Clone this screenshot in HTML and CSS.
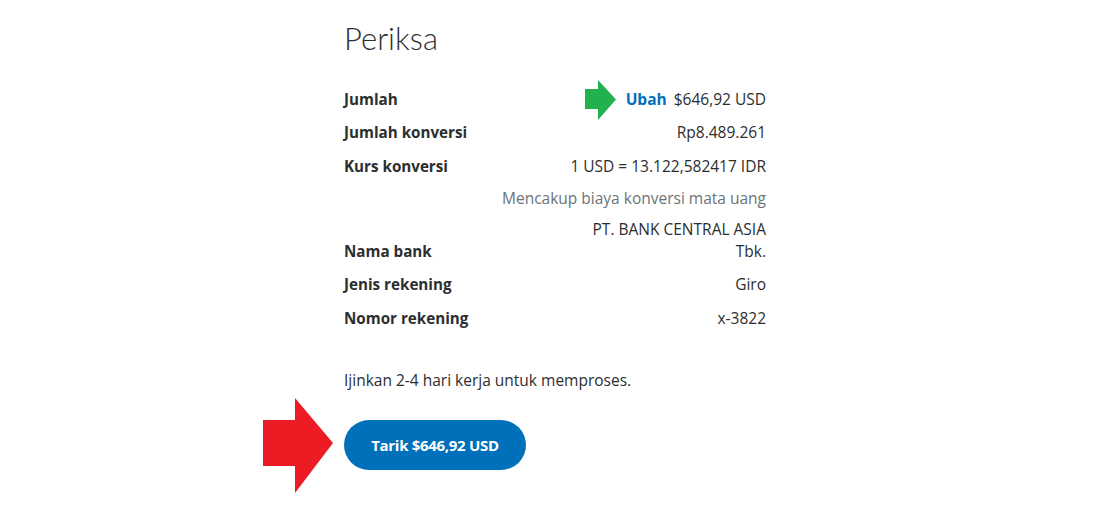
FILE: index.html
```html
<!DOCTYPE html>
<html lang="id">
<head>
<meta charset="utf-8">
<title>Periksa</title>
<link rel="stylesheet" href="styles.css">
</head>
<body>
<main class="review">
  <h1 class="title">Periksa</h1>
  <dl class="details">
    <div class="row">
      <dt>Jumlah</dt>
      <dd><a class="change" href="#">Ubah</a> $646,92 USD</dd>
    </div>
    <div class="row">
      <dt>Jumlah konversi</dt>
      <dd>Rp8.489.261</dd>
    </div>
    <div class="row">
      <dt>Kurs konversi</dt>
      <dd>1 USD = 13.122,582417 IDR</dd>
    </div>
    <div class="note">Mencakup biaya konversi mata uang</div>
    <div class="row row-bank">
      <dt>Nama bank</dt>
      <dd>PT. BANK CENTRAL ASIA<br>Tbk.</dd>
    </div>
    <div class="row">
      <dt>Jenis rekening</dt>
      <dd>Giro</dd>
    </div>
    <div class="row">
      <dt>Nomor rekening</dt>
      <dd>x-3822</dd>
    </div>
  </dl>
  <p class="info">Ijinkan 2-4 hari kerja untuk memproses.</p>
  <button class="withdraw" type="button">Tarik $646,92 USD</button>
</main>
<svg class="arrow arrow-green" width="32" height="41" viewBox="0 0 32 41" aria-hidden="true">
  <polygon points="0,9 13,9 13,0 31,19.5 13,40 13,29 0,29" fill="#22b14c"/>
</svg>
<svg class="arrow arrow-red" width="72" height="96" viewBox="0 0 72 96" aria-hidden="true">
  <polygon points="0,22 32,22 32,0 70,45 32,95 32,68 0,68" fill="#ed1c24"/>
</svg>
</body>
</html>
```
FILE: styles.css
```css
html, body {
  margin: 0;
  padding: 0;
  background: #ffffff;
}
body {
  font-family: "Open Sans", "Noto Sans", sans-serif;
  color: #2c2e2f;
  position: relative;
  width: 1103px;
  height: 519px;
  overflow: hidden;
}
.review {
  width: 422px;
  margin-left: 344px;
  padding-top: 18px;
}
.title {
  margin: 0;
  font-family: "Lato", sans-serif;
  font-weight: 300;
  font-size: 31px;
  line-height: 40px;
  color: #2c2e2f;
}
.details {
  margin: 30px 0 0;
  display: flex;
  flex-direction: column;
  gap: 11.3px;
}
.row {
  display: flex;
  justify-content: space-between;
  align-items: flex-end;
}
.row dt {
  font-weight: 700;
  font-size: 15.2px;
  line-height: 22px;
  color: #2c2e2f;
}
.row dd {
  margin: 0;
  font-size: 15.5px;
  line-height: 22px;
  text-align: right;
  color: #2c2e2f;
}
.change {
  color: #0070ba;
  font-weight: 700;
  text-decoration: none;
  margin-right: 3px;
}
.note {
  text-align: right;
  font-size: 15.5px;
  line-height: 22px;
  color: #6c7378;
  margin-top: -1px;
  margin-bottom: -2px;
}
.info {
  margin: 40px 0 0;
  font-size: 15.5px;
  line-height: 22px;
  color: #2c2e2f;
}
.withdraw {
  margin-top: 29px;
  height: 50px;
  width: 182px;
  border: none;
  border-radius: 25px;
  background: #0070ba;
  color: #ffffff;
  font-family: "Open Sans", "Noto Sans", sans-serif;
  font-weight: 700;
  font-size: 15px;
  letter-spacing: -0.3px;
  padding: 0;
}
.arrow {
  position: absolute;
}
.arrow-green {
  left: 585px;
  top: 80px;
}
.arrow-red {
  left: 263px;
  top: 398px;
}
```
